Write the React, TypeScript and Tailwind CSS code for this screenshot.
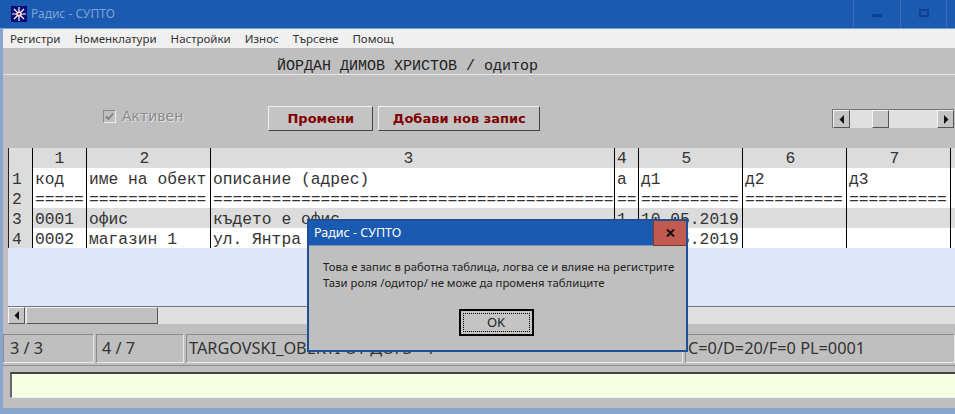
const menu = ["Регистри", "Номенклатури", "Настройки", "Износ", "Търсене", "Помощ"];
const cols = "grid grid-cols-[24px_54px_124px_404px_24px_104px_104px_104px_1fr]";
const eq = "==========";
const rows = [
  { bg: "bg-[#dcdcdc]", cells: ["", "1", "2", "3", "4", "5", "6", "7", ""], head: true },
  { bg: "bg-white", cells: ["1", "код", "име на обект", "описание (адрес)", "а", "д1", "д2", "д3", ""] },
  { bg: "bg-white", cells: ["2", "=====", "============", "=========================================", "==", eq, eq, eq, ""] },
  { bg: "bg-[#dcdcdc]", cells: ["3", "0001", "офис", "където е офис", "1", "10.05.2019", "", "", ""] },
  { bg: "bg-white", cells: ["4", "0002", "магазин 1", "ул. Янтра", "1", "10.05.2019", "", "", ""] },
];

function Arrow({ dir }: { dir: "left" | "right" }) {
  return (
    <svg width="6" height="9" viewBox="0 0 6 9">
      <path d={dir === "left" ? "M5 0v9L0.5 4.5z" : "M1 0v9l4.5-4.5z"} fill="#111" />
    </svg>
  );
}

function ScrollBtn({ dir, w }: { dir: "left" | "right"; w: string }) {
  return (
    <div className={`flex h-full ${w} shrink-0 items-center justify-center border border-t-[#f4f4f4] border-l-[#f4f4f4] border-r-[#555] border-b-[#555] bg-[#c4c4c4]`}>
      <Arrow dir={dir} />
    </div>
  );
}

// header digits sit left of centre in every column except the first
function cellClass(j: number, head?: boolean) {
  if (j === 0) return "bg-[#dcdcdc] pl-[3px]";
  if (!head) return "pl-[2px]";
  if (j === 1) return "text-center";
  if (j === 4) return "pl-[2px]";
  return "pr-[8px] text-center";
}

export default function App() {
  return (
    <div className="relative h-[414px] w-[955px] overflow-hidden bg-[#8aa5cb] pl-[3px] font-['Noto_Sans',sans-serif]">
      <div className="-ml-[3px] flex h-[28px] items-center bg-[#1a5ab0] pl-[11px]">
        <svg width="16" height="16" viewBox="0 0 16 16" className="shrink-0">
          <rect width="16" height="16" fill="#0c0c78" />
          <path d="M8 1v14M1 8h14M3 3l10 10M13 3L3 13" stroke="#fff" strokeWidth="1.2" />
          <circle cx="8" cy="8" r="2.6" fill="#fff" />
          <circle cx="8" cy="8" r="1.3" fill="#d81020" />
        </svg>
        <span className="ml-[4px] text-[12px] text-[#7fa3d6]">Радис - СУПТО</span>
        <div className="ml-auto flex h-full">
          <div className="flex w-[47px] items-center justify-center border-l border-[#3a6db5] pt-[2px]">
            <div className="h-[3px] w-[10px] bg-[#0f3f8e]" />
          </div>
          <div className="flex w-[46px] items-start justify-center border-l border-[#3a6db5] pt-[9px]">
            <div className="h-[8px] w-[10px] border-2 border-[#0f3f8e]" />
          </div>
          <div className="w-[9px] border-l border-[#3a6db5]" />
        </div>
      </div>
      <div className="h-[1px] bg-[#7f9fcf]" />
      <div className="flex h-[19px] items-center gap-[14px] bg-[#f0f0f0] pl-[7px] text-[11.5px] text-[#333]">
        {menu.map((m) => (
          <span key={m}>{m}</span>
        ))}
      </div>

      <div className="flex h-[360px] flex-col bg-[#bfbfbf]">
        <div className="h-[27px] border-b border-[#e4e4e4] pt-[10px] pl-[274px] font-['Liberation_Mono',monospace] text-[15px] leading-[17px] whitespace-pre text-[#222]">
          ЙОРДАН ДИМОВ ХРИСТОВ / одитор
        </div>

        <div className="flex h-[73px] pt-[31px] pl-[100px]">
          <div className="mt-[1px] flex h-[18px] items-center font-['DejaVu_Sans',sans-serif] text-[14px] text-[#8a8a8a] [text-shadow:1px_1px_0_#e6e6e6]">
            <span className="flex h-[13px] w-[13px] items-center justify-center border border-t-[#8a8a8a] border-l-[#8a8a8a] border-r-[#eee] border-b-[#eee]">
              <svg width="9" height="9" viewBox="0 0 9 9">
                <path d="M1 4.5L3.5 7L8 1.5" stroke="#808080" strokeWidth="1.8" fill="none" />
              </svg>
            </span>
            <span className="ml-[6px]">Активен</span>
          </div>
          <div className="ml-[85px] flex h-[25px] gap-[5px] font-['DejaVu_Sans',sans-serif] text-[13px] font-bold text-[#800000]">
            <div className="flex w-[105px] items-center justify-center border border-t-[#f0f0f0] border-l-[#f0f0f0] border-r-[#444] border-b-[#444] bg-[#c4c4c4]">Промени</div>
            <div className="flex w-[162px] items-center justify-center border border-t-[#f0f0f0] border-l-[#f0f0f0] border-r-[#444] border-b-[#444] bg-[#c4c4c4]">Добави нов запис</div>
          </div>
          <div className="mt-[3px] mr-[1px] ml-auto flex h-[19px] w-[122px] border-t border-l border-[#777] bg-[#e0e0e0]">
            <ScrollBtn dir="left" w="w-[17px]" />
            <div className="ml-[22px] h-full w-[17px] border border-t-[#f4f4f4] border-l-[#f4f4f4] border-r-[#555] border-b-[#555] bg-[#c8c8c8]" />
            <div className="flex-1" />
            <ScrollBtn dir="right" w="w-[17px]" />
          </div>
        </div>

        <div className="ml-[5px] flex h-[176px] flex-col bg-[#dfe6fb]">
          <div className="border-l border-[#222] font-['Liberation_Mono',monospace] text-[16.3px] leading-[17px] whitespace-pre text-[#333]">
            {rows.map((r, i) => (
              <div key={i} className={`${cols} h-[20px] ${r.bg}`}>
                {r.cells.map((c, j) => (
                  <div
                    key={j}
                    className={`overflow-hidden ${r.head ? "pt-[2px]" : "pt-[3px]"} ${j < 8 ? "border-r border-black" : ""} ${cellClass(j, r.head)}`}
                  >
                    {c}
                  </div>
                ))}
              </div>
            ))}
          </div>
          <div className="flex-1" />
          <div className="flex h-[18px] border-t border-[#777] bg-[#e0e0e0]">
            <ScrollBtn dir="left" w="w-[17px]" />
            <div className="ml-[1px] h-full w-[132px] border border-t-[#f0f0f0] border-l-[#f0f0f0] border-r-[#555] border-b-[#555] bg-[#c0c0c0]" />
          </div>
        </div>

        <div className="mt-[10px] flex h-[29px] gap-[2px] text-[16.3px] text-[#333]">
          <div className="flex w-[91px] items-center border border-t-[#8a8a8a] border-l-[#8a8a8a] border-r-[#e8e8e8] border-b-[#e8e8e8] pl-[6px]">3 / 3</div>
          <div className="flex w-[88px] items-center border border-t-[#8a8a8a] border-l-[#8a8a8a] border-r-[#e8e8e8] border-b-[#e8e8e8] pl-[5px]">4 / 7</div>
          <div className="flex w-[497px] items-center border border-t-[#8a8a8a] border-l-[#8a8a8a] border-r-[#e8e8e8] border-b-[#e8e8e8] pl-[2px]">TARGOVSKI_OBEKTI OT ДОГЗ - 1</div>
          <div className="flex flex-1 items-center border border-t-[#8a8a8a] border-l-[#8a8a8a] border-r-[#e8e8e8] border-b-[#e8e8e8] pl-[2px]">C=0/D=20/F=0 PL=0001</div>
        </div>
        <div className="mt-[2px] h-[2px] border-t border-[#8f8f8f]" />
        <div className="mt-[5px] ml-[7px] h-[26px] border-t-2 border-b border-l-2 border-t-[#444] border-b-[#eee] border-l-[#666] bg-[#f7ffe2]" />
      </div>

      {/* message box */}
      <div className="absolute top-[219px] left-[307px] flex h-[133px] w-[381px] flex-col border-2 border-[#1f4f94] bg-[#bfbfbf]">
        <div className="flex h-[25px] shrink-0 items-center border-b border-[#6f93c8] bg-[#1a5ab0] pl-[5px] text-[12.5px] text-white">
          Радис - СУПТО
          <div className="ml-auto flex h-[25px] w-[33px] items-center justify-center border-b border-l border-[#7a3a30] bg-[#c25b4f]">
            <svg width="9" height="8" viewBox="0 0 9 8">
              <path d="M1 0.5L8 7.5M8 0.5L1 7.5" stroke="#111" strokeWidth="2" />
            </svg>
          </div>
        </div>
        <div className="mt-[13px] pl-[14px] text-[11.3px] leading-[16px] whitespace-nowrap text-[#222]">
          <div>Това е запис в работна таблица, логва се и влияе на регистрите</div>
          <div>Тази роля /одитор/ не може да променя таблиците</div>
        </div>
        <div className="mt-[18px] flex justify-center">
          <div className="ml-[-3px] flex h-[27px] w-[75px] items-center justify-center border-2 border-black bg-[#c4c4c4] p-[2px]">
            <div className="flex h-full w-full items-center justify-center border border-dotted border-black text-[13px] text-[#222]">OK</div>
          </div>
        </div>
      </div>
    </div>
  );
}
